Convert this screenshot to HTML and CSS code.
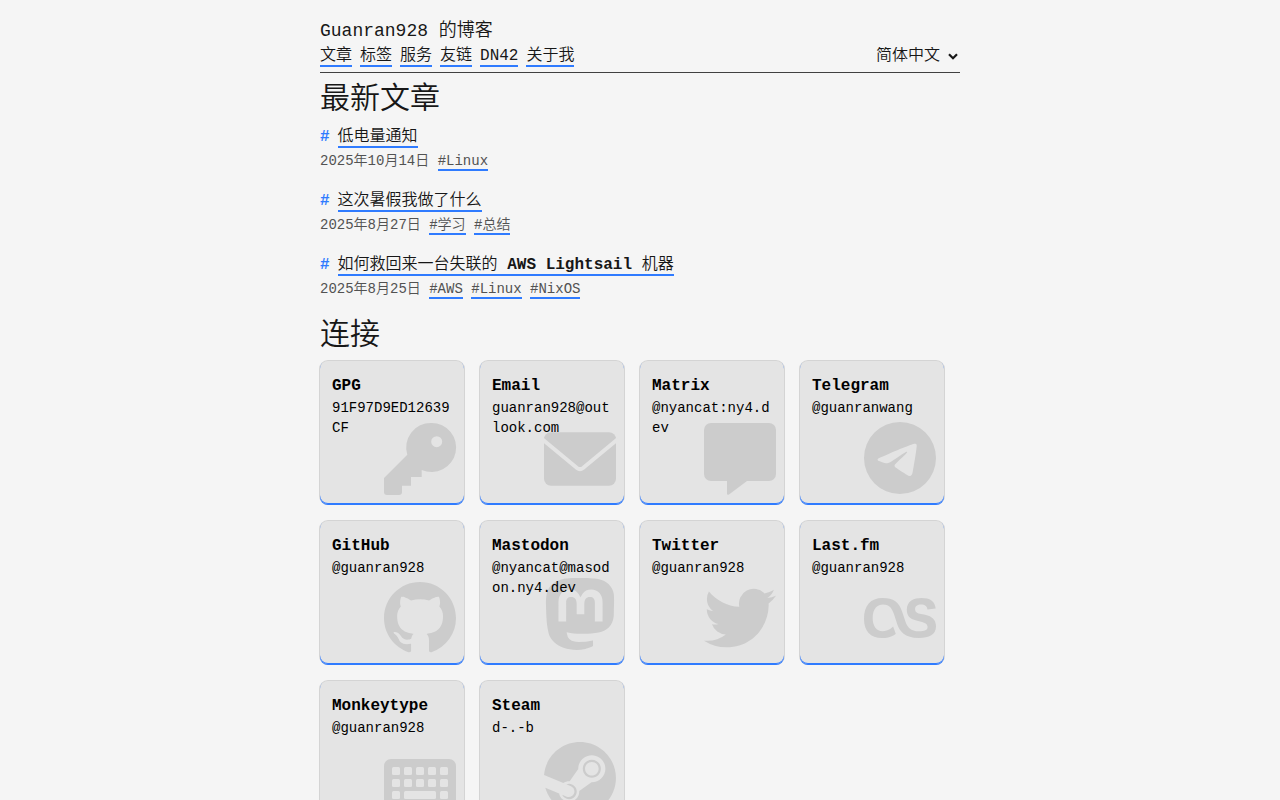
FILE: index.html
```html
<!DOCTYPE html>
<html lang="zh-CN">
<head>
    <meta charset="UTF-8">
    <meta name="viewport" content="width=device-width, initial-scale=1.0">
    <title>Guanran928 的博客</title>
    <link rel="stylesheet" href="styles.css">
</head>
<body>
    <div class="container">
        <header class="site-header">
            <div class="site-title">Guanran928 的博客</div>
            <div class="nav-row">
                <nav class="nav">
                    <a href="#">文章</a>
                    <a href="#">标签</a>
                    <a href="#">服务</a>
                    <a href="#">友链</a>
                    <a href="#">DN42</a>
                    <a href="#">关于我</a>
                </nav>
                <div class="lang">
                    <select class="lang-select">
                        <option>简体中文</option>
                        <option>English</option>
                    </select>
                    <svg class="lang-arrow" viewBox="0 0 10 7"><path d="M1 1.300 5 5.300 9 1.300"/></svg>
                </div>
            </div>
        </header>

        <h2>最新文章</h2>

        <article class="post">
            <div class="post-title"><span class="hash">#</span><a href="#">低电量通知</a></div>
            <div class="post-meta">2025年10月14日 <a href="#">#Linux</a></div>
        </article>
        <article class="post">
            <div class="post-title"><span class="hash">#</span><a href="#">这次暑假我做了什么</a></div>
            <div class="post-meta">2025年8月27日 <a href="#">#学习</a> <a href="#">#总结</a></div>
        </article>
        <article class="post">
            <div class="post-title"><span class="hash">#</span><a href="#">如何救回来一台失联的 <strong>AWS Lightsail</strong> 机器</a></div>
            <div class="post-meta">2025年8月25日 <a href="#">#AWS</a> <a href="#">#Linux</a> <a href="#">#NixOS</a></div>
        </article>

        <h2 class="connect-title">连接</h2>

        <div class="cards">
            <a class="card" href="#">
                <div class="card-name">GPG</div>
                <div class="card-value">91F97D9ED12639CF</div>
                <svg class="card-icon" viewBox="0 -1 72 72"><path fill-rule="evenodd" d="M47.5 0a24.5 24.5 0 1 1-9.800 46.900L37.700 54H27V62.700H18V69a3 3 0 0 1-3 3H3a3 3 0 0 1-3-3V55L23.300 31.800A24.500 24.500 0 0 1 47.500 0zM52.700 13.200a5.500 5.500 0 1 0 0 11 5.500 5.500 0 0 0 0-11z"/></svg>
            </a>
            <a class="card" href="#">
                <div class="card-name">Email</div>
                <div class="card-value">guanran928@outlook.com</div>
                <svg class="card-icon" viewBox="0 0 72 72"><rect y="10.300" width="72" height="53.400" rx="7"/><path class="cut" d="M-2 17 33 46a5 5 0 0 0 6 0L74 17"/></svg>
            </a>
            <a class="card" href="#">
                <div class="card-name">Matrix</div>
                <div class="card-value">@nyancat:ny4.dev</div>
                <svg class="card-icon" viewBox="0 -1 72 72"><path d="M7 0H65a7 7 0 0 1 7 7V51a7 7 0 0 1-7 7H43L25 71.500C24 72.200 23 71.800 23 70.500V58H7a7 7 0 0 1-7-7V7a7 7 0 0 1 7-7z"/></svg>
            </a>
            <a class="card" href="#">
                <div class="card-name">Telegram</div>
                <div class="card-value">@guanranwang</div>
                <svg class="card-icon" viewBox="0 0 24 24"><path d="M11.944 0A12 12 0 0 0 0 12a12 12 0 0 0 12 12 12 12 0 0 0 12-12A12 12 0 0 0 12 0a12 12 0 0 0-.056 0zm4.962 7.224c.1-.002.321.023.465.14a.506.506 0 0 1 .171.325c.016.093.036.306.02.472-.18 1.898-.962 6.502-1.36 8.627-.168.9-.499 1.201-.82 1.23-.696.065-1.225-.46-1.9-.902-1.056-.693-1.653-1.124-2.678-1.8-1.185-.78-.417-1.21.258-1.91.177-.184 3.247-2.977 3.307-3.23.007-.032.014-.15-.056-.212s-.174-.041-.249-.024c-.106.024-1.793 1.14-5.061 3.345-.48.33-.913.49-1.302.48-.428-.008-1.252-.241-1.865-.44-.752-.245-1.349-.374-1.297-.789.027-.216.325-.437.893-.663 3.498-1.524 5.83-2.529 6.998-3.014 3.332-1.386 4.025-1.627 4.476-1.635z"/></svg>
            </a>
            <a class="card" href="#">
                <div class="card-name">GitHub</div>
                <div class="card-value">@guanran928</div>
                <svg class="card-icon" viewBox="0 0 16 16"><path d="M8 0C3.58 0 0 3.58 0 8c0 3.54 2.29 6.53 5.47 7.59.4.07.55-.17.55-.38 0-.19-.01-.82-.01-1.49-2.01.37-2.53-.49-2.69-.94-.09-.23-.48-.94-.82-1.13-.28-.15-.68-.52-.01-.53.63-.01 1.08.58 1.23.82.72 1.21 1.87.87 2.33.66.07-.52.28-.87.51-1.07-1.78-.2-3.64-.89-3.64-3.95 0-.87.31-1.59.82-2.15-.08-.2-.36-1.02.08-2.12 0 0 .67-.21 2.2.82.64-.18 1.32-.27 2-.27.68 0 1.36.09 2 .27 1.53-1.04 2.2-.82 2.2-.82.44 1.1.16 1.92.08 2.12.51.56.82 1.27.82 2.15 0 3.07-1.87 3.75-3.65 3.95.29.25.54.73.54 1.48 0 1.07-.01 1.93-.01 2.2 0 .21.15.46.55.38A8.013 8.013 0 0016 8c0-4.42-3.58-8-8-8z"/></svg>
            </a>
            <a class="card" href="#">
                <div class="card-name">Mastodon</div>
                <div class="card-value">@nyancat@masodon.ny4.dev</div>
                <svg class="card-icon" viewBox="0 1.333 24 24"><path d="M23.268 5.313c-.35-2.578-2.617-4.61-5.304-5.004C17.51.242 15.792 0 11.813 0h-.03c-3.98 0-4.835.242-5.288.309C3.882.692 1.496 2.518.917 5.127.64 6.412.61 7.837.661 9.143c.074 1.874.088 3.745.26 5.611.118 1.24.325 2.47.62 3.68.55 2.237 2.777 4.098 4.96 4.857 2.336.792 4.849.923 7.256.38.265-.061.527-.132.786-.213.585-.184 1.27-.39 1.774-.753a.057.057 0 0 0 .023-.043v-1.809a.052.052 0 0 0-.02-.041.053.053 0 0 0-.046-.01 20.282 20.282 0 0 1-4.709.545c-2.73 0-3.463-1.284-3.674-1.818a5.593 5.593 0 0 1-.319-1.433.053.053 0 0 1 .066-.054c1.517.363 3.072.546 4.632.546.376 0 .75 0 1.125-.01 1.57-.044 3.224-.124 4.768-.422.038-.008.077-.015.11-.024 2.435-.464 4.753-1.92 4.989-5.604.008-.145.03-1.52.03-1.67.002-.512.167-3.63-.024-5.545zm-3.748 9.195h-2.561V8.29c0-1.309-.55-1.976-1.67-1.976-1.23 0-1.846.79-1.846 2.35v3.403h-2.546V8.663c0-1.56-.617-2.35-1.848-2.35-1.112 0-1.668.668-1.67 1.977v6.218H4.822V8.102c0-1.31.337-2.35 1.011-3.12.696-.77 1.608-1.164 2.74-1.164 1.311 0 2.302.5 2.962 1.498l.638 1.06.638-1.06c.66-.999 1.65-1.498 2.96-1.498 1.13 0 2.043.395 2.74 1.164.675.77 1.012 1.81 1.012 3.12z"/></svg>
            </a>
            <a class="card" href="#">
                <div class="card-name">Twitter</div>
                <div class="card-value">@guanran928</div>
                <svg class="card-icon" viewBox="0 0 24 24"><path d="M23.953 4.57a10 10 0 01-2.825.775 4.958 4.958 0 002.163-2.723c-.951.555-2.005.959-3.127 1.184a4.92 4.92 0 00-8.384 4.482C7.69 8.095 4.067 6.13 1.64 3.162a4.822 4.822 0 00-.666 2.475c0 1.71.87 3.213 2.188 4.096a4.904 4.904 0 01-2.228-.616v.06a4.923 4.923 0 003.946 4.827 4.996 4.996 0 01-2.212.085 4.936 4.936 0 004.604 3.417 9.867 9.867 0 01-6.102 2.105c-.39 0-.779-.023-1.17-.067a13.995 13.995 0 007.557 2.209c9.053 0 13.998-7.496 13.998-13.985 0-.21 0-.42-.015-.63A9.935 9.935 0 0024 4.59z"/></svg>
            </a>
            <a class="card" href="#">
                <div class="card-name">Last.fm</div>
                <div class="card-value">@guanran928</div>
                <svg class="card-icon" viewBox="0 0 24 24"><path d="M10.584 17.21l-.88-2.392s-1.43 1.594-3.573 1.594c-1.897 0-3.244-1.649-3.244-4.288 0-3.382 1.704-4.591 3.381-4.591 2.42 0 3.189 1.567 3.849 3.574l.88 2.75c.88 2.666 2.529 4.81 7.285 4.81 3.409 0 5.718-1.044 5.718-3.793 0-2.227-1.265-3.381-3.63-3.931l-1.758-.385c-1.21-.275-1.567-.77-1.567-1.595 0-.934.742-1.484 1.952-1.484 1.32 0 2.034.495 2.144 1.677l2.749-.33c-.22-2.474-1.924-3.492-4.729-3.492-2.474 0-4.893.935-4.893 3.932 0 1.87.907 3.051 3.189 3.601l1.87.44c1.402.33 1.869.907 1.869 1.704 0 1.017-.99 1.43-2.86 1.43-2.776 0-3.93-1.457-4.59-3.464l-.907-2.75c-1.155-3.573-2.997-4.893-6.653-4.893C2.144 5.333 0 7.89 0 12.233c0 4.18 2.144 6.434 5.993 6.434 3.106 0 4.591-1.457 4.591-1.457z"/></svg>
            </a>
            <a class="card" href="#">
                <div class="card-name">Monkeytype</div>
                <div class="card-value">@guanran928</div>
                <svg class="card-icon" viewBox="0 0 72 72">
                    <rect y="17" width="72" height="48" rx="7"/>
                    <g class="keys">
                        <rect x="8" y="25" width="8" height="8" rx="1.500"/><rect x="20" y="25" width="8" height="8" rx="1.500"/><rect x="32" y="25" width="8" height="8" rx="1.500"/><rect x="44" y="25" width="8" height="8" rx="1.500"/><rect x="56" y="25" width="8" height="8" rx="1.500"/>
                        <rect x="8" y="37" width="8" height="8" rx="1.500"/><rect x="20" y="37" width="8" height="8" rx="1.500"/><rect x="32" y="37" width="8" height="8" rx="1.500"/><rect x="44" y="37" width="8" height="8" rx="1.500"/><rect x="56" y="37" width="8" height="8" rx="1.500"/>
                        <rect x="8" y="49" width="8" height="8" rx="1.500"/><rect x="20" y="49" width="32" height="8" rx="1.500"/><rect x="56" y="49" width="8" height="8" rx="1.500"/>
                    </g>
                </svg>
            </a>
            <a class="card" href="#">
                <div class="card-name">Steam</div>
                <div class="card-value">d-.-b</div>
                <svg class="card-icon" viewBox="0 0 24 24"><path d="M11.979 0C5.678 0 .511 4.86.022 11.037l6.432 2.658c.545-.371 1.203-.59 1.912-.59.063 0 .125.004.188.006l2.861-4.142V8.91c0-2.495 2.028-4.524 4.524-4.524 2.494 0 4.524 2.031 4.524 4.527s-2.03 4.525-4.524 4.525h-.105l-4.076 2.911c0 .052.004.105.004.159 0 1.875-1.515 3.396-3.39 3.396-1.635 0-3.016-1.173-3.331-2.727L.436 15.27C1.862 20.307 6.486 24 11.979 24c6.627 0 11.999-5.373 11.999-12S18.605 0 11.979 0zM7.54 18.21l-1.473-.61c.262.543.714.999 1.314 1.25 1.297.539 2.793-.076 3.332-1.375.263-.63.264-1.319.005-1.949s-.75-1.121-1.377-1.383c-.624-.26-1.29-.249-1.878-.03l1.523.63c.956.4 1.409 1.5 1.009 2.455-.397.957-1.497 1.41-2.454 1.012H7.54zm11.415-9.303c0-1.662-1.353-3.015-3.015-3.015-1.665 0-3.015 1.353-3.015 3.015 0 1.665 1.35 3.015 3.015 3.015 1.663 0 3.015-1.35 3.015-3.015zm-5.273-.005c0-1.252 1.013-2.266 2.265-2.266 1.249 0 2.266 1.014 2.266 2.266 0 1.251-1.017 2.265-2.266 2.265-1.253 0-2.265-1.014-2.265-2.265z"/></svg>
            </a>
        </div>
    </div>
</body>
</html>
```

FILE: styles.css
```css
body {
    margin: 0;
    background-color: #f5f5f5;
    color: #171717;
    font-family: "Liberation Mono", "Noto Sans CJK SC", monospace;
    font-size: 16px;
    font-weight: 350;
}
a {
    color: inherit;
    text-decoration: none;
}
strong {
    font-weight: 700;
}
.container {
    width: 640px;
    margin: 0 auto;
    padding: 17px 0 16px;
}
.site-header {
    border-bottom: 1px solid #404040;
    padding-bottom: 5px;
}
.site-title {
    font-size: 18px;
    line-height: 28px;
}
.nav-row {
    display: flex;
    justify-content: space-between;
    align-items: center;
}
.nav {
    display: flex;
    gap: 8px;
}
.nav a {
    display: block;
    padding-top: 2px;
    line-height: 18px;
}
.nav a,
.post-title a,
.post-meta a {
    border-bottom: 2px solid #2f7bff;
}
.lang {
    position: relative;
    display: flex;
}
.lang-select {
    appearance: none;
    width: 84px;
    border: none;
    background: transparent;
    color: inherit;
    font: inherit;
    padding: 0 20px 0 0;
}
.lang-arrow {
    position: absolute;
    top: 50%;
    right: 2px;
    width: 10px;
    height: 7px;
    margin-top: -3px;
    fill: none;
    stroke: #171717;
    stroke-width: 2.200;
    pointer-events: none;
}
h2 {
    font-size: 30px;
    font-weight: 350;
    line-height: 44px;
    margin: 5px 0 3px;
}
.post {
    margin-bottom: 16px;
}
.post-title {
    line-height: 24px;
}
.hash {
    color: #2f7bff;
    font-weight: 700;
    margin-right: 8px;
}
.post-meta {
    color: #525252;
    font-size: 14px;
    line-height: 24px;
}
.connect-title {
    margin: -3px 0 3px;
}
.cards {
    display: grid;
    grid-template-columns: repeat(4, 144px);
    column-gap: 16px;
    row-gap: 17px;
}
.card {
    position: relative;
    display: block;
    height: 143px;
    box-sizing: border-box;
    padding: 13px 12px 12px;
    background-color: #e4e4e4;
    border-radius: 8px;
    box-shadow: 0 1px 0 0 #2f7bff, inset 0 -1px 0 0 #2f7bff, 0 0 0 1px #d4d4d4;
    color: #000;
}
.card-name {
    font-weight: 700;
    line-height: 24px;
}
.card-value {
    position: relative;
    z-index: 1;
    font-size: 14px;
    line-height: 20px;
    overflow-wrap: anywhere;
}
.card-icon {
    position: absolute;
    right: 8px;
    bottom: 10px;
    width: 72px;
    height: 72px;
    overflow: visible;
    fill: #cccccc;
}
.card-icon .cut {
    fill: none;
    stroke: #e4e4e4;
    stroke-width: 4;
}
.card-icon .keys {
    fill: #e4e4e4;
}
```
